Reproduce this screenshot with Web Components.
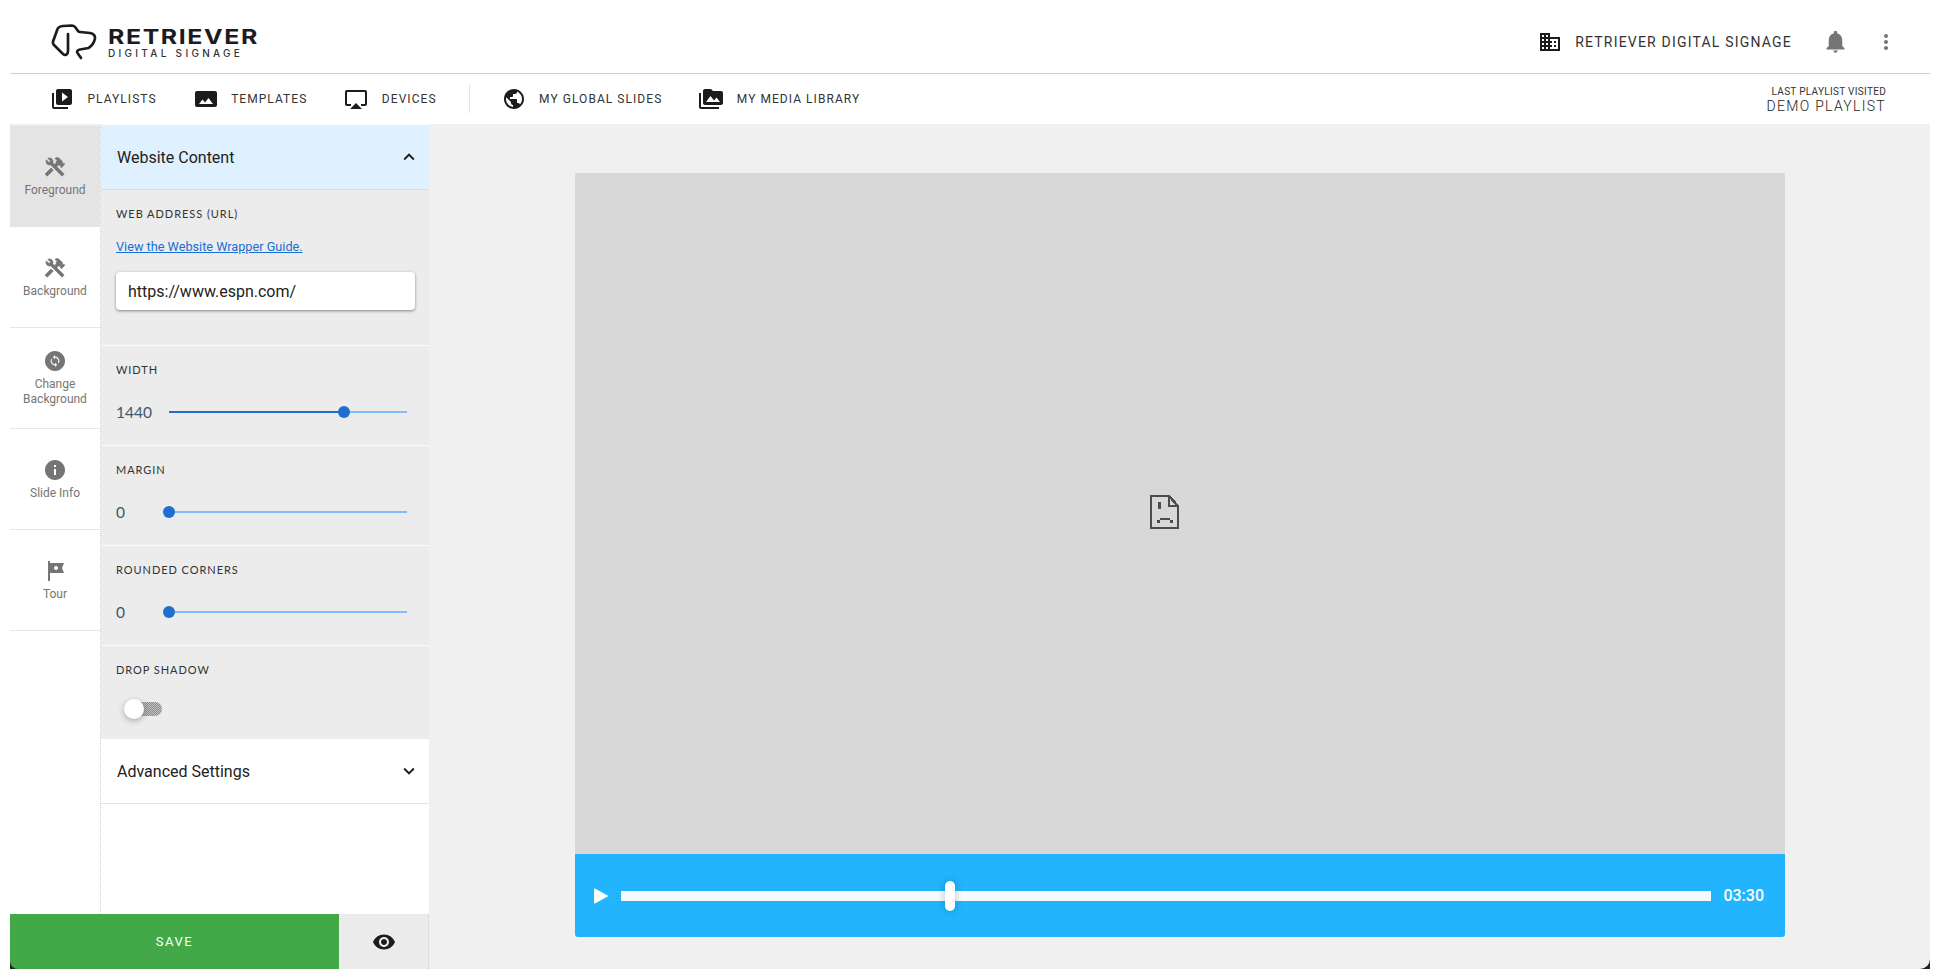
<!DOCTYPE html>
<html>
<head>
<meta charset="utf-8">
<title>Retriever Digital Signage</title>
<style>
  html, body { margin: 0; padding: 0; background: #fff; }
  body { padding: 0 10px; height: 979px; overflow: hidden; font-family: Roboto, "Liberation Sans", sans-serif; }
</style>
</head>
<body>
<ret-app></ret-app>

<script>
// Material icon paths
const ICONS = {
  playlists: '<path d="M4 6H2v14c0 1.1.9 2 2 2h14v-2H4V6zm16-4H8c-1.1 0-2 .9-2 2v12c0 1.1.9 2 2 2h12c1.1 0 2-.9 2-2V4c0-1.1-.9-2-2-2zm-8 12.5v-9l6 4.5-6 4.5z"/>',
  templates: '<path d="M23 18V6c0-1.1-.9-2-2-2H3c-1.1 0-2 .9-2 2v12c0 1.1.9 2 2 2h18c1.1 0 2-.9 2-2zM8.5 12.5l2.5 3.01L14.5 11l4.5 6H5l3.5-4.5z"/>',
  devices: '<path d="M6 22h12l-6-6zM21 3H3c-1.1 0-2 .9-2 2v12c0 1.1.9 2 2 2h4v-2H3V5h18v12h-4v2h4c1.1 0 2-.9 2-2V5c0-1.1-.9-2-2-2z"/>',
  globe: '<path d="M12 2C6.48 2 2 6.48 2 12s4.48 10 10 10 10-4.48 10-10S17.52 2 12 2zm-1 17.93c-3.95-.49-7-3.85-7-7.93 0-.62.08-1.21.21-1.79L9 15v1c0 1.1.9 2 2 2v1.93zm6.9-2.54c-.26-.81-1-1.39-1.9-1.39h-1v-3c0-.55-.45-1-1-1H8v-2h2c.55 0 1-.45 1-1V7h2c1.1 0 2-.9 2-2v-.41c2.93 1.19 5 4.06 5 7.41 0 2.08-.8 3.97-2.1 5.39z"/>',
  media: '<path d="M2 6H0v5h.01L0 20c0 1.1.9 2 2 2h18v-2H2V6zm20-2h-8l-2-2H6c-1.1 0-1.99.9-1.99 2L4 16c0 1.1.9 2 2 2h16c1.1 0 2-.9 2-2V6c0-1.1-.9-2-2-2zM7 15l4.5-6 3.5 4.51 2.5-3.01L21 15H7z"/>',
  domain: '<path d="M12 7V3H2v18h20V7H12zM6 19H4v-2h2v2zm0-4H4v-2h2v2zm0-4H4V9h2v2zm0-4H4V5h2v2zm4 12H8v-2h2v2zm0-4H8v-2h2v2zm0-4H8V9h2v2zm0-4H8V5h2v2zm10 12h-8v-2h2v-2h-2v-2h2v-2h-2V9h8v10zm-2-8h-2v2h2v-2zm0 4h-2v2h2v-2z"/>',
  bell: '<path d="M12 22c1.1 0 2-.9 2-2h-4c0 1.1.89 2 2 2zm6-6v-5c0-3.07-1.64-5.64-4.5-6.32V4c0-.83-.67-1.5-1.5-1.5s-1.5.67-1.5 1.5v.68C7.63 5.36 6 7.92 6 11v5l-2 2v1h16v-1l-2-2z"/>',
  more: '<path d="M12 8c1.1 0 2-.9 2-2s-.9-2-2-2-2 .9-2 2 .9 2 2 2zm0 2c-1.1 0-2 .9-2 2s.9 2 2 2 2-.9 2-2-.9-2-2-2zm0 6c-1.1 0-2 .9-2 2s.9 2 2 2 2-.9 2-2-.9-2-2-2z"/>',
  // mirrored and thickened: hammer sits top right in the reference
  tools: '<g transform="translate(24 0) scale(-1 1)" stroke="currentColor" stroke-width=".7"><rect height="8.48" transform="matrix(0.7071 -0.7071 0.7071 0.7071 -6.8717 17.6255)" width="3" x="16.34" y="12.87"/><path d="M17.5,10c1.93,0,3.5-1.57,3.5-3.5c0-0.58-0.16-1.12-0.41-1.6l-2.7,2.7L16.4,6.11l2.7-2.7C18.62,3.16,18.08,3,17.5,3C15.57,3,14,4.57,14,6.5c0,0.41,0.08,0.8,0.21,1.16l-1.85,1.85l-1.78-1.78l0.71-0.71L9.88,5.61L12,3.49c-1.17-1.17-3.07-1.17-4.24,0L4.22,7.03l1.41,1.41H2.81L2.1,9.15l3.54,3.54l0.71-0.71V9.15l1.41,1.41l0.71-0.71l1.78,1.78l-7.41,7.41l2.12,2.12L16.34,9.79C16.7,9.92,17.09,10,17.5,10z"/></g>',
  change: '<path fill-rule="evenodd" d="M12 2C6.48 2 2 6.48 2 12s4.48 10 10 10 10-4.48 10-10S17.52 2 12 2z"/><path fill="#fff" transform="translate(5.4 5.4) scale(.55)" d="M12 4V1L8 5l4 4V6c3.31 0 6 2.69 6 6 0 1.01-.25 1.97-.7 2.8l1.46 1.46C19.54 15.03 20 13.57 20 12c0-4.42-3.58-8-8-8zm0 14c-3.31 0-6-2.69-6-6 0-1.01.25-1.97.7-2.8L5.24 7.74C4.46 8.97 4 10.43 4 12c0 4.42 3.58 8 8 8v3l4-4-4-4v3z"/>',
  info: '<path d="M12 2C6.48 2 2 6.48 2 12s4.48 10 10 10 10-4.48 10-10S17.52 2 12 2zm1 15h-2v-6h2v6zm0-8h-2V7h2v2z"/>',
  tour: '<path d="M21 4H7V2H5v20h2v-8h14l-2-5 2-5zm-6 5c0 1.1-.9 2-2 2s-2-.9-2-2 .9-2 2-2 2 .9 2 2z"/>',
  less: '<path d="M12 8l-6 6 1.41 1.41L12 10.83l4.59 4.58L18 14z"/>',
  expand: '<path d="M16.59 8.59L12 13.17 7.41 8.59 6 10l6 6 6-6z"/>',
  eye: '<path d="M12 4.5C7 4.5 2.73 7.61 1 12c1.73 4.39 6 7.5 11 7.5s9.27-3.11 11-7.5c-1.73-4.39-6-7.5-11-7.5zM12 17c-2.76 0-5-2.24-5-5s2.24-5 5-5 5 2.24 5 5-2.24 5-5 5zm0-8c-1.66 0-3 1.34-3 3s1.34 3 3 3 3-1.34 3-3-1.34-3-3-3z"/>'
};

// Base class: subclasses return their markup from template()
class RetElement extends HTMLElement {
  constructor() {
    super();
    this.attachShadow({ mode: 'open' });
  }
  connectedCallback() {
    this.shadowRoot.innerHTML = this.template();
  }
  template() { return ''; }
}

class RetIcon extends RetElement {
  template() {
    const size = this.getAttribute('size') || 24;
    return `<style>
        :host { display: inline-flex; flex: none; width: ${size}px; height: ${size}px; color: inherit; }
        svg { display: block; width: 100%; height: 100%; fill: currentColor; }
      </style>
      <svg viewBox="0 0 24 24">${ICONS[this.getAttribute('name')] || ''}</svg>`;
  }
}

class RetLogo extends RetElement {
  template() {
    return `<style>
        :host { display: flex; align-items: center; gap: 10px; color: #1c1c1e; }
        svg { display: block; width: 48px; height: 38px; fill: none; stroke: #1c1c1e; stroke-width: 2.7; stroke-linecap: round; stroke-linejoin: round; }
        .words { display: flex; flex-direction: column; font-family: Inter, sans-serif; margin-top: 2px; width: 150px; }
        .big { font-size: 20.5px; font-weight: 700; line-height: 19px; letter-spacing: 1.3px; white-space: nowrap; transform: scaleX(1.215); transform-origin: 0 50%; }
        .small { font-size: 10px; font-weight: 500; line-height: 11px; margin-top: 2px; letter-spacing: 3.3px; color: #333; white-space: nowrap; }
      </style>
      <svg viewBox="0 0 48 38"><path d="M18 11V28C18 31.5 15.5 33 13 31L3.5 21.5C2.7 20.5 2.7 19.5 3 18.5L7 7.5C7.5 5 10 3.3 13 3L22 2.5C23.5 2.5 24.5 3 25.5 4.5L28 8C28.5 8.7 29 9 30 9L40 10C43.5 10.5 45.5 13 45 15.5C44 20 42 23 38.5 25L30 26.5C27.5 27 26.5 28.5 27.5 30L31 35"/></svg>
      <div class="words"><div class="big">RETRIEVER</div><div class="small">DIGITAL SIGNAGE</div></div>`;
  }
}

class RetTopbar extends RetElement {
  template() {
    return `<style>
        :host { display: flex; align-items: center; height: 63px; padding: 10px 32px 0 40px; border-bottom: 1px solid #cfcfcf; }
        .account { display: flex; align-items: center; margin-left: auto; font: 400 14px Roboto, sans-serif; letter-spacing: 1.2px; color: #333; }
        .org { color: #1c1c1e; margin-right: 13px; }
        .bell { color: #757575; margin-left: 30px; }
        .dots { color: #757575; margin-left: 25px; }
      </style>
      <ret-logo></ret-logo>
      <div class="account">
        <ret-icon class="org" name="domain"></ret-icon><span>RETRIEVER DIGITAL SIGNAGE</span>
        <ret-icon class="bell" name="bell" size="27"></ret-icon>
        <ret-icon class="dots" name="more"></ret-icon>
      </div>`;
  }
}

class RetNavItem extends RetElement {
  template() {
    return `<style>
        :host { display: flex; align-items: center; gap: 13.5px; font: 400 12px Roboto, sans-serif; letter-spacing: 1.05px; color: #333; white-space: nowrap; }
        ret-icon { color: #1c1c1e; }
      </style>
      <ret-icon name="${this.getAttribute('icon')}"></ret-icon><slot></slot>`;
  }
}

class RetNavbar extends RetElement {
  template() {
    return `<style>
        :host { display: flex; align-items: center; height: 50px; padding: 0 44px 0 40px; gap: 37px; }
        .sep { width: 1px; height: 28px; background: #e2e2e2; margin: 0 -5px 0 -5px; }
        .last { margin-left: auto; text-align: right; color: #333; margin-top: 2px; }
        .last div:first-child { font: 400 10px/12px Roboto, sans-serif; letter-spacing: .3px; }
        .last div:last-child { font: 300 14px/16px Roboto, sans-serif; letter-spacing: 1.3px; color: #222; }
      </style>
      <ret-nav-item icon="playlists">PLAYLISTS</ret-nav-item>
      <ret-nav-item icon="templates">TEMPLATES</ret-nav-item>
      <ret-nav-item icon="devices">DEVICES</ret-nav-item>
      <div class="sep"></div>
      <ret-nav-item icon="globe">MY GLOBAL SLIDES</ret-nav-item>
      <ret-nav-item icon="media">MY MEDIA LIBRARY</ret-nav-item>
      <div class="last"><div>LAST PLAYLIST VISITED</div><div>DEMO PLAYLIST</div></div>`;
  }
}

class RetRailItem extends RetElement {
  template() {
    return `<style>
        :host { display: flex; flex-direction: column; align-items: center; justify-content: center; gap: 4px; height: 100px; border-bottom: 1px solid #e6e6e6; font: 400 12px/15px Roboto, sans-serif; color: #757575; text-align: center; background: #fff; }
        :host([active]) { background: #e4e4e4; border-bottom-color: #e4e4e4; }
        ret-icon { color: #757575; }
      </style>
      <ret-icon name="${this.getAttribute('icon')}"></ret-icon><div><slot></slot></div>`;
  }
}

class RetRail extends RetElement {
  template() {
    return `<style>
        :host { display: block; width: 90px; flex: none; border-top: 2px solid #eee; border-right: 1px dotted #cfcfcf; background: #fff; }
      </style>
      <ret-rail-item icon="tools" active>Foreground</ret-rail-item>
      <ret-rail-item icon="tools">Background</ret-rail-item>
      <ret-rail-item icon="change">Change<br>Background</ret-rail-item>
      <ret-rail-item icon="info">Slide Info</ret-rail-item>
      <ret-rail-item icon="tour">Tour</ret-rail-item>`;
  }
}

class RetAccordionHead extends RetElement {
  template() {
    return `<style>
        :host { display: flex; align-items: center; justify-content: space-between; height: 65px; padding: 0 9px 0 16px; box-sizing: border-box; border-bottom: 1px solid #e2e2e2; background: #fff; font: 400 16px Roboto, sans-serif; color: #222; }
        :host([open]) { background: #dff0ff; border-bottom-color: #d4dde4; }
        ret-icon { color: #1c1c1e; }
      </style>
      <slot></slot><ret-icon size="22" name="${this.hasAttribute('open') ? 'less' : 'expand'}"></ret-icon>`;
  }
}

class RetSection extends RetElement {
  template() {
    return `<style>
        :host { display: block; box-sizing: border-box; height: var(--h, 100px); padding: 17px 14px 0 15px; background: #ececec; border-bottom: 1px solid #fafafa; }
        .label { font: 400 11px/14px Lato, sans-serif; letter-spacing: .95px; color: #333; text-transform: uppercase; }
      </style>
      <div class="label">${this.getAttribute('label')}</div>
      <slot></slot>`;
  }
}

class RetSlider extends RetElement {
  template() {
    const pct = Number(this.getAttribute('percent') || 0);
    return `<style>
        :host { display: flex; align-items: center; height: 30px; margin-top: 20px; font: 400 15.5px Lato, sans-serif; color: #41566e; }
        .value { width: 53px; }
        .track { position: relative; width: 238px; height: 2px; background: #7fbcff; }
        .fill { position: absolute; left: 0; top: 0; bottom: 0; width: ${pct}%; background: #1e6fd0; }
        .thumb { position: absolute; left: ${pct}%; top: 50%; width: 12px; height: 12px; margin: -6px 0 0 -6px; border-radius: 50%; background: #1e6fd0; }
      </style>
      <div class="value"><slot></slot></div>
      <div class="track"><div class="fill"></div><div class="thumb"></div></div>`;
  }
}

class RetToggle extends RetElement {
  template() {
    return `<style>
        :host { display: block; position: relative; width: 38px; height: 20px; margin: 22px 0 0 8px; }
        .track { position: absolute; left: 10px; right: 0; top: 3px; height: 14px; border-radius: 7px; background: repeating-conic-gradient(#8c8c8c 0 25%, #c2c2c2 0 50%) 0 0 / 2px 2px; }
        .knob { position: absolute; left: 0; top: 0; width: 20px; height: 20px; border-radius: 50%; background: #fff; box-shadow: 0 2px 6px rgba(0,0,0,.28); }
      </style>
      <div class="track"></div><div class="knob"></div>`;
  }
}

class RetUrlField extends RetElement {
  template() {
    return `<style>
        :host { display: flex; align-items: center; height: 38px; padding: 0 12px; margin-top: 18px; background: #fff; border-radius: 4px; box-shadow: 0 1px 3px rgba(0,0,0,.45); font: 400 16px Roboto, sans-serif; color: #222; }
      </style>
      <slot></slot>`;
  }
}

class RetPanel extends RetElement {
  template() {
    return `<style>
        :host { display: block; width: 328px; flex: none; margin-top: 1px; background: #fff; border-right: 1px dotted #cfcfcf; }
        a { display: block; margin-top: 18px; font: 400 12.7px/15px Roboto, sans-serif; color: #1a6fd4; }
        .url { --h: 156px; }
        .shadow { --h: 93px; border-bottom: 0; }
      </style>
      <ret-accordion-head open>Website Content</ret-accordion-head>
      <ret-section class="url" label="Web Address (URL)">
        <a href="#">View the Website Wrapper Guide.</a>
        <ret-url-field>https://www.espn.com/</ret-url-field>
      </ret-section>
      <ret-section label="Width"><ret-slider percent="73.5">1440</ret-slider></ret-section>
      <ret-section label="Margin"><ret-slider percent="0">0</ret-slider></ret-section>
      <ret-section label="Rounded Corners"><ret-slider percent="0">0</ret-slider></ret-section>
      <ret-section class="shadow" label="Drop Shadow"><ret-toggle></ret-toggle></ret-section>
      <ret-accordion-head>Advanced Settings</ret-accordion-head>`;
  }
}

class RetSaveBar extends RetElement {
  template() {
    return `<style>
        :host { display: flex; height: 55px; flex: none; background: #222; }
        .save { flex: none; width: 329px; display: flex; align-items: center; justify-content: center; background: #43a848; color: #fff; font: 400 13px Roboto, sans-serif; letter-spacing: 1.6px; border-bottom-left-radius: 8px; }
        .eye { flex: 1; display: flex; align-items: center; justify-content: center; padding-left: 1px; background: #ebebeb; color: #1c1c1e; border-right: 1px dotted #cfcfcf; }
      </style>
      <div class="save">SAVE</div>
      <div class="eye"><ret-icon name="eye"></ret-icon></div>`;
  }
}

class RetPlayer extends RetElement {
  template() {
    return `<style>
        :host { display: flex; align-items: center; height: 83px; flex: none; gap: 12px; padding: 0 21px 0 19px; background: #22b4fc; border-radius: 0 0 3px 3px; color: #fff; font: 500 16px Roboto, sans-serif; }
        svg { display: block; width: 15px; height: 16px; fill: #fff; flex: none; }
        .track { position: relative; flex: 1; height: 10px; background: #f4fafe; }
        .thumb { position: absolute; left: 324px; top: -10px; width: 10px; height: 30px; border-radius: 5px; background: #fff; box-shadow: 0 0 8px rgba(0,0,0,.22); }
      </style>
      <svg viewBox="0 0 15 16"><path d="M1 0.5L14.5 8L1 15.5C.5 15.7 0 15.4 0 14.8V1.2C0 .6 .5 .3 1 .5z"/></svg>
      <div class="track"><div class="thumb"></div></div>
      <span>03:30</span>`;
  }
}

class RetPreview extends RetElement {
  template() {
    return `<style>
        :host { display: flex; flex-direction: column; flex: 1; min-width: 0; padding: 49px 145px 32px 146px; background: #f0f0f0; border-bottom-right-radius: 10px; }
        .frame { flex: 1; display: flex; align-items: center; justify-content: center; background: #d8d8d8; }
        svg { display: block; width: 29px; height: 36px; shape-rendering: crispEdges; margin: 0 32px 3px 0; fill: none; stroke: #4a4c50; stroke-width: 2.4; }
      </style>
      <div class="frame">
        <svg viewBox="0 0 29 36">
          <path d="M1 2H19V12H28V34H1Z"/><path d="M19 2L28 12"/>
          <path fill="#4a4c50" stroke="none" d="M8 8h3v7H8zM7 26h3v3H7zM20 26h3v3h-3zM10 24h10v2H10z"/>
        </svg>
      </div>
      <ret-player></ret-player>`;
  }
}

class RetApp extends RetElement {
  template() {
    return `<style>
        :host { display: flex; flex-direction: column; height: 969px; background: #fff; }
        .work { flex: 1; display: flex; min-height: 0; background: #222; }
        .side { width: 419px; flex: none; display: flex; flex-direction: column; background: #fff; }
        .top { flex: 1; display: flex; min-height: 0; }
      </style>
      <ret-topbar></ret-topbar>
      <ret-navbar></ret-navbar>
      <div class="work">
        <div class="side">
          <div class="top"><ret-rail></ret-rail><ret-panel></ret-panel></div>
          <ret-save-bar></ret-save-bar>
        </div>
        <ret-preview></ret-preview>
      </div>`;
  }
}

// children first, so nested elements upgrade as they get parsed
customElements.define('ret-icon', RetIcon);
customElements.define('ret-logo', RetLogo);
customElements.define('ret-topbar', RetTopbar);
customElements.define('ret-nav-item', RetNavItem);
customElements.define('ret-navbar', RetNavbar);
customElements.define('ret-rail-item', RetRailItem);
customElements.define('ret-rail', RetRail);
customElements.define('ret-accordion-head', RetAccordionHead);
customElements.define('ret-section', RetSection);
customElements.define('ret-slider', RetSlider);
customElements.define('ret-toggle', RetToggle);
customElements.define('ret-url-field', RetUrlField);
customElements.define('ret-panel', RetPanel);
customElements.define('ret-save-bar', RetSaveBar);
customElements.define('ret-player', RetPlayer);
customElements.define('ret-preview', RetPreview);
customElements.define('ret-app', RetApp);
</script>
</body>
</html>
